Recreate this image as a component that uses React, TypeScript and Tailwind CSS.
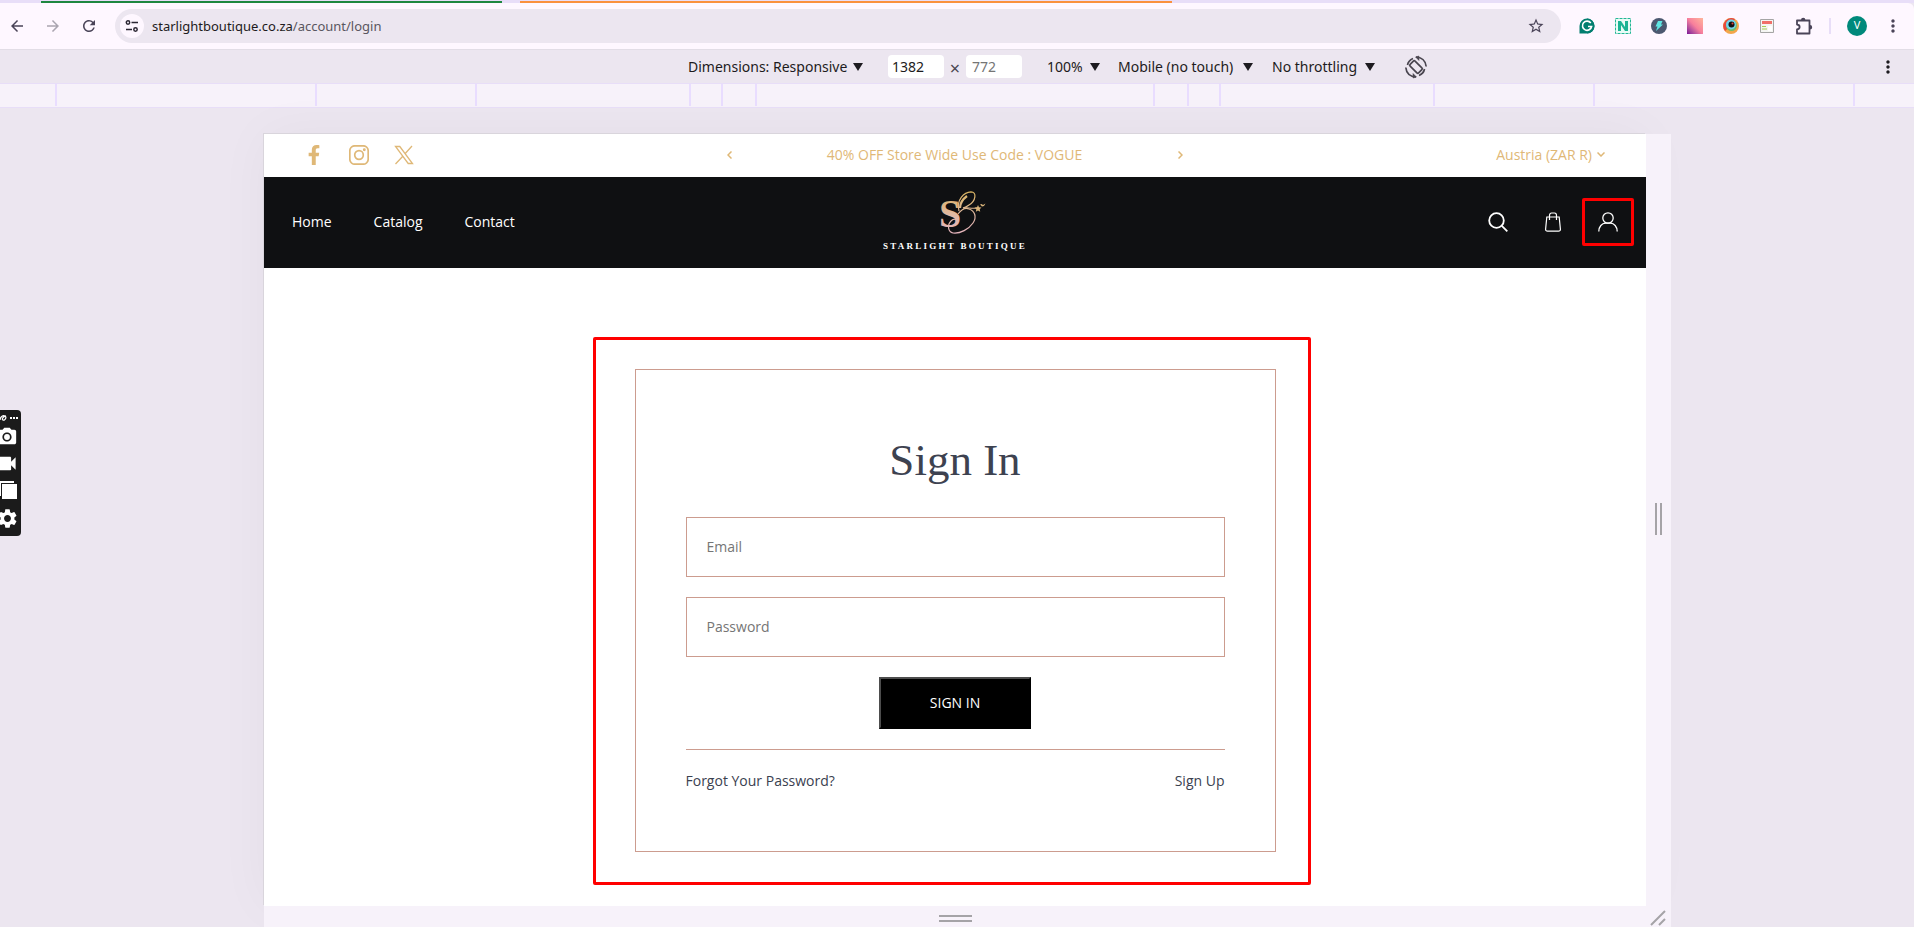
import React from 'react';
import { FaFacebookF } from 'react-icons/fa';
import {
  MdArrowBack,
  MdArrowForward,
  MdCameraAlt,
  MdMoreVert,
  MdRefresh,
  MdSettings,
  MdStarBorder,
  MdVideocam,
} from 'react-icons/md';

// Widths between the media query marks, mirrored around the centre
const Ruler: React.FC = () => {
  const mark = 'shrink-0 border-l-2 border-[#e9ddff]';
  return (
    <div className="flex h-[25px] justify-center overflow-hidden border-y border-[#e8def8] bg-[#f7f2fa] pb-px pr-1">
      <div className={`${mark} w-[260px]`} />
      <div className={`${mark} w-[160px]`} />
      <div className={`${mark} w-[214px]`} />
      <div className={`${mark} w-[32px]`} />
      <div className={`${mark} w-[34px]`} />
      <div className={`${mark} w-[398px]`} />
      <div className={`${mark} w-[34px]`} />
      <div className={`${mark} w-[32px]`} />
      <div className={`${mark} w-[214px]`} />
      <div className={`${mark} w-[160px]`} />
      <div className={`${mark} w-[262px] border-r-2`} />
    </div>
  );
};

const Extensions: React.FC = () => (
  <div className="flex items-center gap-5">
    <svg className="size-4" viewBox="0 0 16 16">
      <path d="M8 .5A7.5 7.5 0 0 0 .5 8v7.5H8A7.5 7.5 0 0 0 8 .5Z" fill="#027e6f" />
      <path d="M8 .5a7.5 7.5 0 0 1 0 15" fill="#027e6f" />
      <path d="M11.800 5A4.600 4.600 0 1 0 12.600 8.500H9" fill="none" stroke="#fff" strokeWidth="1.600" />
    </svg>
    <svg className="size-4" viewBox="0 0 16 16">
      <rect x=".5" y=".5" width="15" height="15" fill="#e9fbf6" stroke="#22b795" strokeDasharray="3 1" />
      <path d="M3 13V3h3l4 6V3h3v10h-3L6 7v6Z" fill="#1bb394" />
    </svg>
    <svg className="size-4" viewBox="0 0 16 16">
      <circle cx="8" cy="8" r="8" fill="#4c5870" />
      <path d="M7 3h4.500L10 6.500h2L5 13l1.500-4.500h-2Z" fill="#5fe6e3" />
    </svg>
    <span className="size-4 bg-linear-to-bl from-[#ffb59a] via-[#f77f9c] to-[#7b0f96]" />
    <svg className="size-4" viewBox="0 0 16 16">
      <circle cx="8" cy="8" r="8" fill="#f3a64b" />
      <path d="M2 13A8 8 0 0 1 12 1.100L8 8Z" fill="#e8483c" />
      <circle cx="8.500" cy="7.500" r="5.500" fill="#6fbf6a" />
      <circle cx="8" cy="6.500" r="5" fill="#73d3ea" />
      <circle cx="8.500" cy="6.500" r="3" fill="#111" />
      <circle cx="9.500" cy="5.500" r="1" fill="#e8483c" />
    </svg>
    <svg className="size-4" viewBox="0 0 16 16">
      <path d="M1.500 1.500h13v13h-13Z" fill="#f5f5f3" stroke="#a5a5a5" />
      <path d="M3 3h10v3H3Z" fill="#f0706a" />
      <path d="M3 8.500h4M3 11h5" stroke="#a5cf55" />
      <path d="M9 8h4v5H9Z" fill="#fff" />
    </svg>
    <svg className="size-[18px]" viewBox="0 0 18 18">
      <path d="M2 3.500h12.500v13H2v-4c3.500-.5 3.500-4.500 0-5Z" fill="none" stroke="#4a4458" strokeWidth="1.800" strokeLinejoin="round" />
      <path d="M6 3a2.200 2.200 0 0 1 4.400 0ZM15 8a2.200 2.200 0 0 1 0 4.400Z" fill="#4a4458" />
    </svg>
  </div>
);

const BrowserBar: React.FC = () => (
  <header>
    <div className="flex h-[3px] bg-[#e8def8] pl-[41px] pt-px">
      <div className="h-0.5 w-[461px] bg-[#1e8740]" />
      <div className="ml-[18px] h-0.5 w-[652px] bg-[#fa903e]" />
    </div>
    <div className="flex h-[47px] items-center rounded-tr-md border-b border-[#e2dde6] bg-[#fef7ff] pb-px pl-2 pr-[11px] text-[#4a4458]">
      <div className="flex gap-[18px]">
        <button aria-label="Back"><MdArrowBack className="size-[18px]" /></button>
        <button aria-label="Forward"><MdArrowForward className="size-[18px] text-[#aaa5b0]" /></button>
        <button aria-label="Reload"><MdRefresh className="size-[18px]" /></button>
      </div>
      <div className="ml-[17px] flex h-[34px] flex-1 items-center rounded-full bg-[#ece6f0] pl-[5px] pr-4">
        <span className="flex size-6 items-center justify-center rounded-full bg-[#fef7ff]">
          <svg className="size-3.5" viewBox="0 0 14 14" fill="none" stroke="#2b2733" strokeWidth="1.500">
            <circle cx="3" cy="3.500" r="1.700" />
            <path d="M6.500 3.500H13M1 10.500h6" />
            <circle cx="10.500" cy="10.500" r="1.700" />
          </svg>
        </span>
        <p className="ml-2 flex-1 font-['Noto_Sans',sans-serif] text-[13px] leading-5 text-[#1d1b20]">
          starlightboutique.co.za<span className="text-[#5a5660]">/account/login</span>
        </p>
        <button aria-label="Bookmark"><MdStarBorder className="size-[18px]" /></button>
      </div>
      <div className="ml-[18px] flex items-center">
        <Extensions />
        <span className="ml-4 h-4 w-0.5 bg-[#e8def8]" />
        <span className="ml-4 flex size-5 items-center justify-center rounded-full bg-[#00897b] font-['Noto_Sans',sans-serif] text-[11px] text-white">V</span>
        <button aria-label="Menu" className="ml-4"><MdMoreVert className="size-5" /></button>
      </div>
    </div>
  </header>
);

interface PickerProps {
  label: string;
  className: string;
}

const Picker: React.FC<PickerProps> = ({ label, className }) => (
  <div className={`relative flex items-center ${className}`}>
    <select aria-label={label} className="w-full appearance-none bg-transparent">
      <option>{label}</option>
    </select>
    <svg className="pointer-events-none absolute right-0 h-2 w-2.5" viewBox="0 0 10 8">
      <path d="M0 0h10L5 8Z" fill="#1d1b20" />
    </svg>
  </div>
);

const DeviceBar: React.FC = () => (
  <div className="relative flex h-[33px] items-center justify-center pl-[202px] font-['Noto_Sans',sans-serif] text-sm leading-5 text-[#1d1b20]">
    <Picker label="Dimensions: Responsive" className="w-[175px]" />
    <input aria-label="Width" defaultValue="1382" className="ml-[25px] h-[23px] w-14 rounded bg-white px-1 outline-none" />
    <span className="w-[22px] pt-0.5 text-center text-lg text-[#49454f]">×</span>
    <input aria-label="Height" defaultValue="772" className="h-[23px] w-14 rounded bg-white px-1.5 text-[#757575] outline-none" />
    <Picker label="100%" className="ml-[25px] w-[53px]" />
    <Picker label="Mobile (no touch)" className="ml-[18px] w-[135px]" />
    <Picker label="No throttling" className="ml-[19px] w-[103px]" />
    <button aria-label="Rotate" className="ml-[29px]">
      <svg className="size-6" viewBox="0 0 24 24" fill="none" stroke="#49454f" strokeWidth="1.700">
        <rect x="8.500" y="6" width="7" height="12" rx="1.200" transform="rotate(-45 12 12)" />
        <path d="M1.800 12.500c.5 5.500 4.500 9 10.200 9.500M22.200 11.500C21.700 6 17.700 2.500 12 2" />
        <path d="M9 18.500 12.500 22 9 23ZM15 5.500 11.500 2 15 1Z" fill="#49454f" strokeWidth=".5" />
        <path d="M3.500 10c.5-2.800 2.500-5.200 5.500-6.500M20.500 14c-.5 2.800-2.500 5.200-5.500 6.500" />
      </svg>
    </button>
    <button aria-label="More options" className="absolute right-4"><MdMoreVert className="size-5" /></button>
  </div>
);

const Logo: React.FC = () => (
  <a href="#" className="flex flex-col items-center gap-[6px]" aria-label="Starlight Boutique">
    <svg className="ml-4 h-[43px] w-12 overflow-visible" viewBox="0 0 48 43">
      <defs>
        <linearGradient id="gold" x1="0" y1="0" x2="0" y2="43" gradientUnits="userSpaceOnUse">
          <stop offset="0" stopColor="#d9b45f" />
          <stop offset=".55" stopColor="#e0b8a2" />
          <stop offset="1" stopColor="#e5b3bd" />
        </linearGradient>
      </defs>
      <text x="0" y="36" fontFamily="Liberation Serif, serif" fontWeight="700" fontSize="40" fill="url(#gold)">S</text>
      <g fill="none" stroke="url(#gold)" strokeWidth="1.200">
        <path d="M20 20C17 9 25 1 32 .8c6 0 5 9-2 13.200-2 1.500-4 2.500-6 3" />
        <path d="M21 17C21 12 24 8 28 5" strokeWidth="2.200" />
        <path d="M19 23c4-5 8-6.500 11-5 6 2 8 8 4 14-4 6-13 11-20 10-5-1-6-8-2-12 2-2 4-2 5-1" />
        <path d="M24 17c4-1 8 1 14 0" />
      </g>
      <path d="m39 14 1 2.200 2.500.3-1.800 1.700.5 2.500-2.200-1.200-2.200 1.200.5-2.500-1.800-1.700 2.500-.3ZM41 13.500l1.500-.5 1.500 1 2.500-1.500-1.500 2.500-2 .5Z" fill="#d9b47a" />
    </svg>
    <span className="whitespace-nowrap font-['Liberation_Serif',serif] text-[9px] font-bold leading-3 tracking-[0.25em] text-white">STARLIGHT BOUTIQUE</span>
  </a>
);

const StoreHeader: React.FC = () => (
  <>
    <div className="grid h-[43px] grid-cols-[1fr_456px_1fr] items-center pb-0.5 pl-10 pr-[41px] text-sm text-[#dfb877]">
      <div className="flex items-center gap-[25px]">
        <a href="#" aria-label="Facebook"><FaFacebookF className="size-5" /></a>
        <a href="#" aria-label="Instagram">
          <svg className="size-5" viewBox="0 0 20 20" fill="none" stroke="currentColor" strokeWidth="1.700">
            <rect x=".8" y=".8" width="18.400" height="18.400" rx="5" />
            <circle cx="10" cy="10" r="4.300" />
            <circle cx="15.300" cy="4.700" r=".6" fill="currentColor" />
          </svg>
        </a>
        <a href="#" aria-label="X">
          <svg className="size-5" viewBox="0 0 20 20" fill="none" stroke="currentColor" strokeWidth="1.300">
            <path d="M1.500 1.500h4.300l12.700 17h-4.300ZM18 1l-7 7.800M8.800 11.200 1.500 19" />
          </svg>
        </a>
      </div>
      <div className="flex items-center justify-between">
        <button aria-label="Previous"><svg className="h-2 w-[5px]" viewBox="0 0 5 8" fill="none" stroke="currentColor" strokeWidth="1.500"><path d="M4.500.5 1 4l3.500 3.500" /></svg></button>
        <p>40% OFF Store Wide Use Code : VOGUE</p>
        <button aria-label="Next"><svg className="h-2 w-[5px]" viewBox="0 0 5 8" fill="none" stroke="currentColor" strokeWidth="1.500"><path d="M.5.5 4 4 .5 7.500" /></svg></button>
      </div>
      <button className="flex items-center gap-[5px] justify-self-end">
        Austria (ZAR R)
        <svg className="h-[5px] w-2" viewBox="0 0 8 5" fill="none" stroke="currentColor" strokeWidth="1.500"><path d="M.5.5 4 4 7.500.5" /></svg>
      </button>
    </div>
    <div className="grid h-[91px] grid-cols-[1fr_auto_1fr] items-center bg-[#0f1012] pb-0.5 pl-7 pr-[28px] text-white">
      <nav className="flex gap-[42px] text-sm font-medium">
        <a href="#">Home</a>
        <a href="#">Catalog</a>
        <a href="#">Contact</a>
      </nav>
      <Logo />
      <div className="flex items-center gap-[35px] justify-self-end">
        <button aria-label="Search">
          <svg className="size-5" viewBox="0 0 20 20" fill="none" stroke="currentColor" strokeWidth="1.800">
            <circle cx="8.500" cy="8.500" r="7.300" />
            <path d="m13.800 13.800 5.500 5.500" />
          </svg>
        </button>
        <button aria-label="Cart">
          <svg className="size-5" viewBox="0 0 20 20" fill="none" stroke="currentColor" strokeWidth="1.200">
            <path d="M3.800 5h12.400l1.200 12.200c.1 1.200-.7 2-1.900 2h-11c-1.200 0-2-.8-1.900-2Z" />
            <path d="M6.500 8V3.500C6.500 1.800 7.500 1 8.500 1h3c1 0 2 .8 2 2.500V8" />
          </svg>
        </button>
        <button aria-label="Account" className="relative">
          <svg className="size-5" viewBox="0 0 20 20" fill="none" stroke="currentColor" strokeWidth="1.300">
            <circle cx="10" cy="6" r="5.200" />
            <path d="M.8 19.500C.8 14.500 4 11.200 7.500 11.200h5c3.500 0 6.700 3.300 6.700 8.300" />
          </svg>
          <span className="absolute -inset-x-4 -inset-y-3.5 rounded-xs border-3 border-[#ff0000]" />
        </button>
      </div>
    </div>
  </>
);

const SignInForm: React.FC = () => {
  const field = 'mb-5 block h-[60px] w-full border border-[#cc9c8f] px-5 pb-0.5 outline-none placeholder:text-[#757575]';
  return (
    <div className="relative mx-auto mt-[101px] w-[641px]">
      <form className="border border-[#cc9c8f] px-[50px] py-[60px] text-sm leading-5 text-[#3a4150]">
        <h1 className="mb-[27px] text-center font-['Liberation_Serif',serif] text-[45px] leading-[60px] text-[#3d4250]">Sign In</h1>
        <input type="email" aria-label="Email" placeholder="Email" className={field} />
        <input type="password" aria-label="Password" placeholder="Password" className={field} />
        <button type="button" className="mx-auto block h-[52px] w-[152px] border-2 border-black border-l-[#4d4d4d] border-t-[#4d4d4d] bg-black font-medium text-white">
          SIGN IN
        </button>
        <div className="mt-5 flex justify-between border-t border-[#cc9c8f] pt-[21px]">
          <a href="#">Forgot Your Password?</a>
          <a href="#">Sign Up</a>
        </div>
      </form>
      {/* highlight around the form */}
      <div className="pointer-events-none absolute -bottom-[33px] -left-[42px] -right-[35px] -top-8 rounded-xs border-3 border-[#ff0000]" />
    </div>
  );
};

// Capture tool docked to the left edge
const CaptureDock: React.FC = () => (
  <div className="absolute left-0 top-[410px] flex h-[126px] w-[21px] flex-col items-start overflow-hidden rounded-r bg-[#1b1b1b] pt-1 text-white">
    <svg className="h-2 w-[19px]" viewBox="0 0 19 8">
      <path d="M0 6c0-3 3-5 5-4s0 5-2 4 1-4 3-4" fill="none" stroke="#fff" strokeWidth="1.300" />
      <path d="M10 3h2v2h-2zM13 3h2v2h-2zM16 3h2v2h-2z" fill="#fff" />
    </svg>
    <MdCameraAlt className="-ml-1 mt-1 size-[22px]" />
    <MdVideocam className="-ml-2 mt-0.5 size-[27px]" />
    <svg className="mt-1 h-[18px] w-[17px]" viewBox="0 0 17 18">
      <path d="M0 0h14v2H1v13H0Z" fill="#fff" />
      <path d="M2 3h15v15H2Z" fill="#fff" />
    </svg>
    <MdSettings className="-ml-1 mt-2 size-[23px]" />
  </div>
);

export default function App() {
  return (
    <div className="relative flex h-screen flex-col overflow-hidden bg-[#ece6f0]">
      <BrowserBar />
      <DeviceBar />
      <Ruler />
      <main className="ml-[264px] mr-[243px] mt-[26px] grid flex-1 grid-cols-[1fr_25px] grid-rows-[1fr_21px] bg-[#f7f2fa] font-['Open_Sans',sans-serif]">
        <div className="bg-white shadow-[-1px_-1px_0_#d9d5dc,0_0_50px_#0000000a]">
          <StoreHeader />
          <SignInForm />
        </div>
        <div className="z-10 flex items-center justify-center gap-[3px] bg-[#f7f2fa] pb-[3px] pr-px">
          <span className="h-8 w-0.5 bg-[#a5a3a7]" />
          <span className="h-8 w-0.5 bg-[#a5a3a7]" />
        </div>
        <div className="z-10 flex flex-col items-center justify-center gap-[3px] bg-[#f7f2fa] pt-1">
          <span className="h-0.5 w-[33px] bg-[#a5a3a7]" />
          <span className="h-0.5 w-[33px] bg-[#a5a3a7]" />
        </div>
        <div className="z-10 bg-[#f7f2fa] pl-1 pt-1">
          <svg className="size-4" viewBox="0 0 16 16" stroke="#a5a3a7" strokeWidth="2">
            <path d="M1 15 15 1M9 15l6-6" />
          </svg>
        </div>
      </main>
      <CaptureDock />
    </div>
  );
}
